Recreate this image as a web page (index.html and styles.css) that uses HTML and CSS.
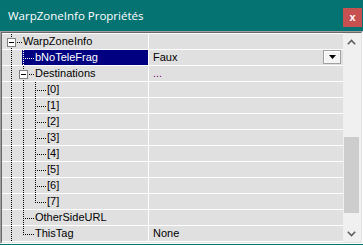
FILE: index.html
```
<!DOCTYPE html>
<html lang="fr">
<head>
  <meta charset="UTF-8" />
  <title>WarpZoneInfo Propriétés</title>
  <link rel="stylesheet" href="styles.css">
</head>
<body>

  <div class="window">
    <!-- Title bar -->
    <div class="titlebar">
      <span class="title">WarpZoneInfo Propriétés</span>
      <button class="close">x</button>
    </div>

    <!-- Property grid -->
    <div class="client">
      <div class="view">
        <div class="grid">

          <div class="row">
            <div class="name"><span class="g t box"></span><span class="label">WarpZoneInfo</span></div>
            <div class="value"></div>
          </div>

          <div class="row">
            <div class="name"><span class="g v"></span><span class="sel"><span class="g t"></span><span class="label">bNoTeleFrag</span></span></div>
            <div class="value"><span class="text">Faux</span><span class="drop"><svg width="7" height="4" viewBox="0 0 7 4"><path d="M0 0h7L3.5 4z" fill="#000"/></svg></span></div>
          </div>

          <div class="row">
            <div class="name"><span class="g v"></span><span class="g t box"></span><span class="label">Destinations</span></div>
            <div class="value"><span class="text more">...</span></div>
          </div>

          <div class="row">
            <div class="name"><span class="g v"></span><span class="g v"></span><span class="g t"></span><span class="label">[0]</span></div>
            <div class="value"></div>
          </div>
          <div class="row">
            <div class="name"><span class="g v"></span><span class="g v"></span><span class="g t"></span><span class="label">[1]</span></div>
            <div class="value"></div>
          </div>
          <div class="row">
            <div class="name"><span class="g v"></span><span class="g v"></span><span class="g t"></span><span class="label">[2]</span></div>
            <div class="value"></div>
          </div>
          <div class="row">
            <div class="name"><span class="g v"></span><span class="g v"></span><span class="g t"></span><span class="label">[3]</span></div>
            <div class="value"></div>
          </div>
          <div class="row">
            <div class="name"><span class="g v"></span><span class="g v"></span><span class="g t"></span><span class="label">[4]</span></div>
            <div class="value"></div>
          </div>
          <div class="row">
            <div class="name"><span class="g v"></span><span class="g v"></span><span class="g t"></span><span class="label">[5]</span></div>
            <div class="value"></div>
          </div>
          <div class="row">
            <div class="name"><span class="g v"></span><span class="g v"></span><span class="g t"></span><span class="label">[6]</span></div>
            <div class="value"></div>
          </div>
          <div class="row">
            <div class="name"><span class="g v"></span><span class="g v"></span><span class="g l"></span><span class="label">[7]</span></div>
            <div class="value"></div>
          </div>

          <div class="row">
            <div class="name"><span class="g v"></span><span class="g t"></span><span class="label">OtherSideURL</span></div>
            <div class="value"></div>
          </div>

          <div class="row">
            <div class="name"><span class="g v"></span><span class="g l"></span><span class="label">ThisTag</span></div>
            <div class="value"><span class="text">None</span></div>
          </div>

        </div>

        <div class="scrollbar">
          <div class="arrow"><svg width="9" height="6" viewBox="0 0 9 6"><path d="M0.8 5.2L4.5 1.5L8.2 5.2" fill="none" stroke="#606060" stroke-width="1.6"/></svg></div>
          <div class="track"><div class="thumb"></div></div>
          <div class="arrow"><svg width="9" height="6" viewBox="0 0 9 6"><path d="M0.8 0.8L4.5 4.5L8.2 0.8" fill="none" stroke="#606060" stroke-width="1.6"/></svg></div>
        </div>
      </div>
    </div>
  </div>

</body>
</html>
```

FILE: styles.css
```
body {
  margin: 0;
  background: #067373;
  font-family: 'Liberation Sans', Arial, sans-serif;
}

.window {
  width: 363px;
  height: 245px;
  overflow: hidden;
}

/* title bar */
.titlebar {
  height: 31px;
  display: flex;
  justify-content: space-between;
  padding-left: 8px;
  box-sizing: border-box;
}

.title {
  color: #fff;
  font-family: 'Open Sans', sans-serif;
  font-size: 11.5px;
  line-height: 31px;
}

.close {
  width: 19px;
  height: 19px;
  margin: 8px 1px 0 0;
  padding: 0;
  border: none;
  background: #c75050;
  color: #fff;
  font-family: 'Liberation Sans', Arial, sans-serif;
  font-weight: bold;
  font-size: 11px;
  line-height: 17px;
}

/* frame around the grid */
.client {
  border-top: 1px solid #a0a0a0;
  border-left: 1px solid #a0a0a0;
  border-right: 1px solid #fff;
  border-bottom: 1px solid #fff;
  background: #f0f0f0;
}

.view {
  display: flex;
  border: 1px solid;
  border-color: #696969 #e3e3e3 #e3e3e3 #696969;
}

.grid {
  width: 341px;
  border-top: 1px solid #fff;
  background: #e0e0e0;
  font-size: 11px;
  color: #000;
}

.row {
  display: flex;
  height: 15px;
  border-bottom: 1px solid #fff;
}

.name {
  --dot: #000;
  width: 137px;
  padding-left: 9px;
  border-right: 1px solid #fff;
  display: flex;
  overflow: hidden;
}

.label {
  line-height: 15px;
  white-space: nowrap;
  flex: 1;
}

.sel {
  --dot: #fff;
  display: flex;
  flex: 1;
  margin-left: -1px;
  padding-left: 1px;
  background: #000080;
  color: #fff;
}

/* tree guides: v = through, t = tee, l = last child */
.g {
  position: relative;
  flex: none;
  width: 12px;
  height: 15px;
}

.g.v {
  background: repeating-linear-gradient(to bottom, var(--dot) 0 1px, transparent 1px 2px) 0 0 / 1px 100% no-repeat;
}

.g.t {
  background:
    repeating-linear-gradient(to bottom, var(--dot) 0 1px, transparent 1px 2px) 0 0 / 1px 100% no-repeat,
    repeating-linear-gradient(to right, var(--dot) 0 1px, transparent 1px 2px) 0 8px / 12px 1px no-repeat;
}

.g.l {
  background:
    repeating-linear-gradient(to bottom, var(--dot) 0 1px, transparent 1px 2px) 0 0 / 1px 9px no-repeat,
    repeating-linear-gradient(to right, var(--dot) 0 1px, transparent 1px 2px) 0 8px / 12px 1px no-repeat;
}

.g.box::before {
  content: '';
  position: absolute;
  left: -4px;
  top: 4px;
  width: 7px;
  height: 7px;
  border: 1px solid #808080;
  background: #fff;
}

.g.box::after {
  content: '';
  position: absolute;
  left: -2px;
  top: 8px;
  width: 5px;
  height: 1px;
  background: #000;
}

.value {
  flex: 1;
  display: flex;
  padding-left: 4px;
}

.text {
  line-height: 15px;
  flex: 1;
}

.more {
  color: #800080;
}

.drop {
  width: 16px;
  height: 12px;
  margin-right: 2px;
  border: 1px solid #a0a0a0;
  background: #f4f4f4;
  box-shadow: inset 1px 1px #fff;
  display: flex;
  align-items: center;
  justify-content: center;
}

/* scrollbar */
.scrollbar {
  width: 17px;
  display: flex;
  flex-direction: column;
  background: #f0f0f0;
}

.arrow {
  height: 17px;
  display: flex;
  align-items: center;
  justify-content: center;
}

.track {
  flex: 1;
  padding: 0 1px;
}

.thumb {
  margin-top: 87px;
  height: 76px;
  background: #cdcdcd;
}
```
